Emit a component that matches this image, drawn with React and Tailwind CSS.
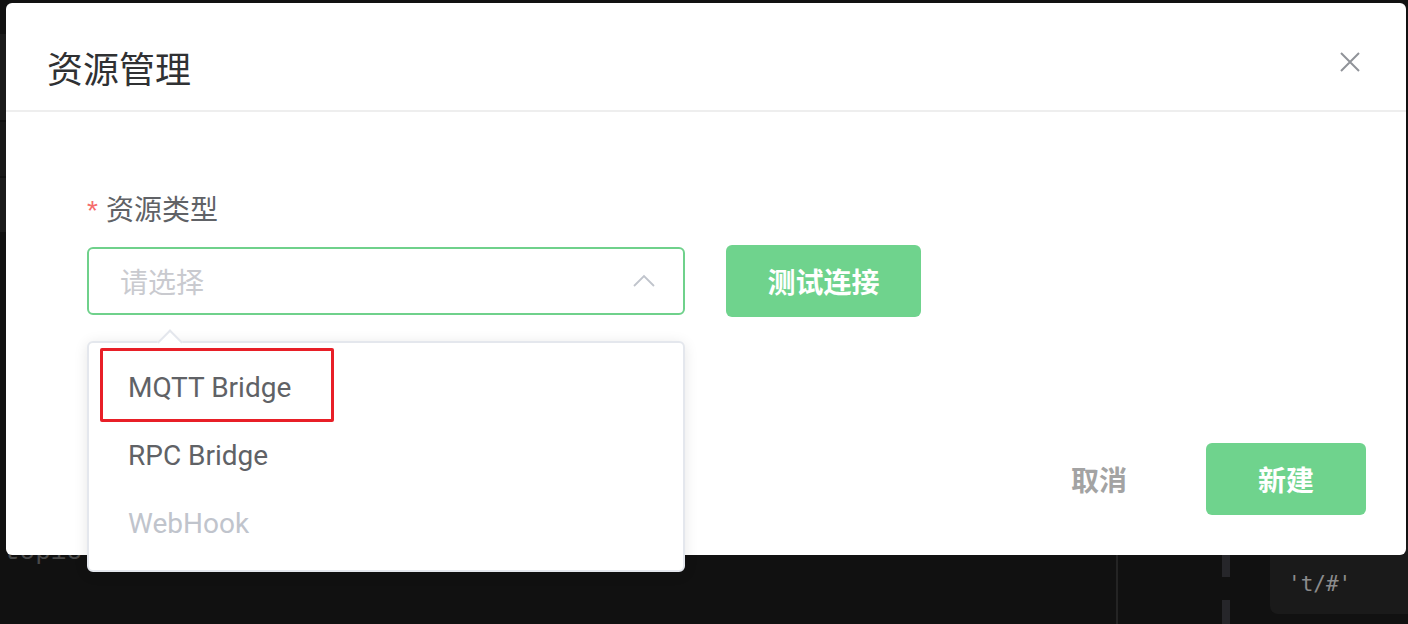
import React from "react";

const cjk = "font-['Noto_Sans_CJK_SC',sans-serif]";

const options = [
  { label: "MQTT Bridge", disabled: false },
  { label: "RPC Bridge", disabled: false },
  { label: "WebHook", disabled: true },
];

const ResourceDialog = () => {
  return (
    <div className="absolute left-[6px] top-[3px] w-[1400px] h-[552px] bg-white rounded-[6px]">
      {/* header */}
      <div className="relative h-[109px] border-b-2 border-[#eeeeee] pl-[41px] pt-[46px]">
        <h2 className={`${cjk} text-[36px] leading-[36px] text-[#303133]`}>资源管理</h2>
        <button className="absolute right-[45px] top-[48px] w-[22px] h-[22px] text-[#909399]">
          <svg viewBox="0 0 22 22" className="w-full h-full" fill="none" stroke="currentColor" strokeWidth="2">
            <path d="M2 2 L20 20 M20 2 L2 20" />
          </svg>
        </button>
      </div>

      {/* body */}
      <div className="pl-[81px] pt-[76px]">
        <label className={`${cjk} block text-[28px] leading-[40px] text-[#606266] mb-[14px]`}>
          <span className="text-[#f56c6c] mr-[8px] font-['Liberation_Sans',sans-serif]">*</span>
          资源类型
        </label>
        <div className="flex items-center gap-[41px]">
          <div className="w-[598px] h-[68px] border-2 border-[#6fd18b] rounded-[6px] flex items-center justify-between pl-[31px] pr-[28px]">
            <span className={`${cjk} text-[28px] text-[#c9cacf]`}>请选择</span>
            <svg width="22" height="14" viewBox="0 0 22 14" fill="none" stroke="#c0c4cc" strokeWidth="1.8">
              <path d="M1 12 L11 2 L21 12" />
            </svg>
          </div>
          <button className={`${cjk} w-[195px] h-[72px] rounded-[6px] bg-[#6fd38d] text-white text-[28px] font-bold`}>
            测试连接
          </button>
        </div>
      </div>

      {/* footer */}
      <div className="flex justify-end items-center gap-[27px] pr-[40px] pt-[126px]">
        <button className={`${cjk} w-[160px] h-[72px] text-[28px] font-bold text-[#a3a3a3]`}>取消</button>
        <button className={`${cjk} w-[160px] h-[72px] rounded-[6px] bg-[#6fd38d] text-white text-[28px] font-bold`}>
          新建
        </button>
      </div>

      {/* dropdown */}
      <div className="absolute left-[81px] top-[338px] w-[598px] h-[231px] bg-white border-2 border-[#e4e7ed] rounded-[6px] shadow-[0_2px_14px_rgba(0,0,0,0.1)] pt-[11px]">
        <div className="absolute left-[72px] top-[-10px] w-[18px] h-[18px] bg-white border-l-2 border-t-2 border-[#e4e7ed] rotate-45" />
        {options.map((o) => (
          <div
            key={o.label}
            className={`h-[68px] flex items-center pl-[39px] font-['Roboto',sans-serif] text-[28px] ${
              o.disabled ? "text-[#c0c4cc]" : "text-[#606266]"
            }`}
          >
            {o.label}
          </div>
        ))}
        <div className="absolute left-[11px] top-[5px] w-[234px] h-[74px] border-[3px] border-[#e81f27] rounded-[2px]" />
      </div>
    </div>
  );
};

export default function App() {
  return (
    <div className="relative w-[1408px] h-[624px] bg-[#111111] overflow-hidden">
      {/* background editor, mostly hidden behind the dialog */}
      <div className="flex flex-col w-[40px] pt-[34px] gap-[2px]">
        <div className="h-[86px] bg-[#1b1b1b]" />
        <div className="h-[54px] bg-[#181818]" />
        <div className="h-[54px] bg-[#1b1b1b]" />
      </div>
      <div className="absolute left-[4px] top-[533px] font-['Liberation_Mono',monospace] text-[26px] text-[#4a4a4a]">
        topic
      </div>
      <div className="absolute left-[1116px] top-[555px] w-[2px] h-[69px] bg-[#242424]" />
      <div className="absolute left-[1222px] top-[555px] w-[8px] h-[22px] bg-[#26262a]" />
      <div className="absolute left-[1222px] top-[600px] w-[8px] h-[24px] bg-[#26262a]" />
      <div className="absolute left-[1270px] top-[540px] w-[160px] h-[74px] bg-[#1a1a1a] rounded-bl-[8px] flex items-end pb-[14px] pl-[18px]">
        <span className="font-['DejaVu_Sans_Mono',monospace] text-[21px] text-[#8c8c8c]">'t/#'</span>
      </div>

      <ResourceDialog />
    </div>
  );
}
